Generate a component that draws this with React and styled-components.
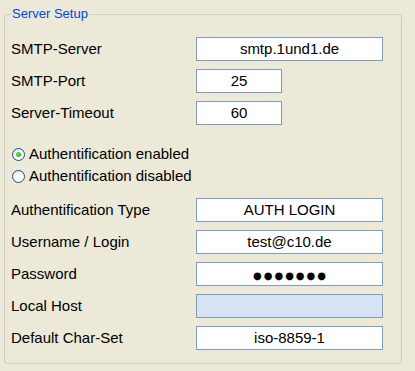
import React from 'react'
import styled, {createGlobalStyle} from 'styled-components'

const GlobalStyle = createGlobalStyle`
  html, body {
    margin: 0;
    padding: 0;
    background: #ece9d8;
  }
  body {
    font-family: "Liberation Sans", Arial, sans-serif;
    color: #000;
  }
`

const Page = styled.div`
  width: 415px;
  height: 371px;
  padding: 6px 0 0 4px;
  box-sizing: border-box;
`

const Group = styled.fieldset`
  width: 398px;
  height: 358px;
  box-sizing: border-box;
  margin: 0;
  padding: 15px 0 0 6px;
  border: 1px solid #d0d0bf;
  border-radius: 3px;
`

const Legend = styled.legend`
  color: #0046d5;
  font-size: 13px;
  line-height: 16px;
  padding: 0 1px;
  margin-left: 0;
`

const Rows = styled.div`
  display: grid;
  grid-template-columns: 185px 187px;
  row-gap: 8px;
`

const Label = styled.div`
  font-size: 15px;
  line-height: 24px;
  height: 24px;
  padding-bottom: 4px;
  box-sizing: border-box;
  white-space: nowrap;
`

const Field = styled.div`
  width: ${props => props.$short ? '86px' : '187px'};
  height: 24px;
  box-sizing: border-box;
  border: 1px solid #7f9db9;
  background: ${props => props.$disabled ? '#d6e3f5' : '#fff'};
  font-size: 15px;
  line-height: 22px;
  text-align: center;
  white-space: nowrap;
`

const Dots = styled.span`
  font-family: "DejaVu Sans", sans-serif;
  font-size: 10px;
  letter-spacing: 2px;
  padding-left: 2px;
`

const RadioGroup = styled.div`
  grid-column: 1 / span 2;
  display: flex;
  flex-direction: column;
  margin: 10px 0 3px 0;
`

const RadioRow = styled.label`
  display: flex;
  align-items: center;
  gap: 4px;
  height: 22px;
  font-size: 15px;
  padding-left: 1px;
`

const RadioDot = styled.span`
  width: 13px;
  height: 13px;
  box-sizing: border-box;
  border-radius: 50%;
  border: 1px solid #1c5180;
  background: radial-gradient(circle at 65% 65%, #fff 30%, #dcdcd4 100%);
  display: flex;
  align-items: center;
  justify-content: center;

  &::after {
    content: '';
    width: 5px;
    height: 5px;
    border-radius: 50%;
    background: ${props => props.$checked ? 'radial-gradient(circle at 40% 40%, #5ee05e, #21a121)' : 'transparent'};
  }
`

const RadioText = styled.span`
  padding-bottom: 2px;
`

const top = [
  {label: 'SMTP-Server', value: 'smtp.1und1.de'},
  {label: 'SMTP-Port', value: '25', short: true},
  {label: 'Server-Timeout', value: '60', short: true},
]

const bottom = [
  {label: 'Authentification Type', value: 'AUTH LOGIN'},
  {label: 'Username / Login', value: 'test@c10.de'},
  {label: 'Password', value: <Dots>●●●●●●●</Dots>},
  {label: 'Local Host', value: '', disabled: true},
  {label: 'Default Char-Set', value: 'iso-8859-1'},
]

const renderRow = (row) => (
  <React.Fragment key={row.label}>
    <Label>{row.label}</Label>
    <Field $short={row.short} $disabled={row.disabled}>{row.value}</Field>
  </React.Fragment>
)

const App = () => {
  return (
    <Page>
      <GlobalStyle />
      <Group>
        <Legend>Server Setup</Legend>
        <Rows>
          {top.map(renderRow)}
          <RadioGroup>
            <RadioRow><RadioDot $checked /><RadioText>Authentification enabled</RadioText></RadioRow>
            <RadioRow><RadioDot /><RadioText>Authentification disabled</RadioText></RadioRow>
          </RadioGroup>
          {bottom.map(renderRow)}
        </Rows>
      </Group>
    </Page>
  )
}

export default App
